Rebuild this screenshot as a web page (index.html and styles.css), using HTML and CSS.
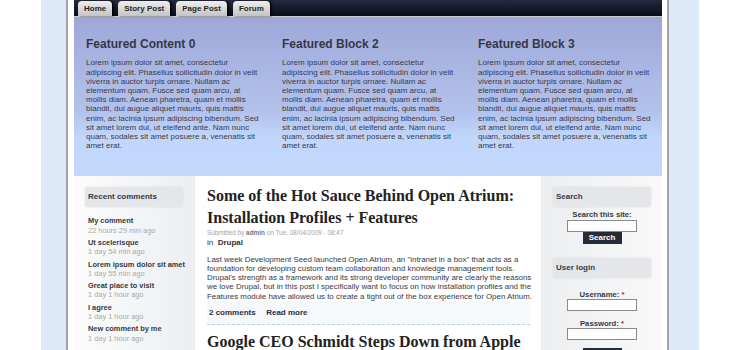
FILE: index.html
```html
<!DOCTYPE html>
<html>
<head>
  <link rel="stylesheet" href="styles.css">
</head>
<body>
  <div class="wrap">
    <div class="page">
      <div class="nav">
        <a class="tab">Home</a>
        <a class="tab">Story Post</a>
        <a class="tab">Page Post</a>
        <a class="tab">Forum</a>
      </div>

      <div class="featured">
        <div class="feat-col">
          <h2>Featured Content 0</h2>
          <p>Lorem ipsum dolor sit amet, consectetur adipiscing elit. Phasellus sollicitudin dolor in velit viverra in auctor turpis ornare. Nullam ac elementum quam. Fusce sed quam arcu, at mollis diam. Aenean pharetra, quam et mollis blandit, dui augue aliquet mauris, quis mattis enim, ac lacinia ipsum adipiscing bibendum. Sed sit amet lorem dui, ut eleifend ante. Nam nunc quam, sodales sit amet posuere a, venenatis sit amet erat.</p>
        </div>
        <div class="feat-col">
          <h2>Featured Block 2</h2>
          <p>Lorem ipsum dolor sit amet, consectetur adipiscing elit. Phasellus sollicitudin dolor in velit viverra in auctor turpis ornare. Nullam ac elementum quam. Fusce sed quam arcu, at mollis diam. Aenean pharetra, quam et mollis blandit, dui augue aliquet mauris, quis mattis enim, ac lacinia ipsum adipiscing bibendum. Sed sit amet lorem dui, ut eleifend ante. Nam nunc quam, sodales sit amet posuere a, venenatis sit amet erat.</p>
        </div>
        <div class="feat-col">
          <h2>Featured Block 3</h2>
          <p>Lorem ipsum dolor sit amet, consectetur adipiscing elit. Phasellus sollicitudin dolor in velit viverra in auctor turpis ornare. Nullam ac elementum quam. Fusce sed quam arcu, at mollis diam. Aenean pharetra, quam et mollis blandit, dui augue aliquet mauris, quis mattis enim, ac lacinia ipsum adipiscing bibendum. Sed sit amet lorem dui, ut eleifend ante. Nam nunc quam, sodales sit amet posuere a, venenatis sit amet erat.</p>
        </div>
      </div>

      <div class="main">
        <div class="sidebar sidebar-left">
          <div class="block">
            <h3 class="block-title">Recent comments</h3>
            <ul class="comments">
              <li><a>My comment</a><span>22 hours 29 min ago</span></li>
              <li><a>Ut scelerisque</a><span>1 day 54 min ago</span></li>
              <li><a>Lorem ipsum dolor sit amet</a><span>1 day 55 min ago</span></li>
              <li><a>Great place to visit</a><span>1 day 1 hour ago</span></li>
              <li><a>I agree</a><span>1 day 1 hour ago</span></li>
              <li><a>New comment by me</a><span>1 day 1 hour ago</span></li>
            </ul>
          </div>
        </div>

        <div class="content">
          <div class="node">
            <h1 class="node-title">Some of the Hot Sauce Behind Open Atrium: Installation Profiles + Features</h1>
            <div class="submitted">Submitted by <b>admin</b> on Tue, 08/04/2009 - 08:47</div>
            <div class="terms">in &nbsp;<a>Drupal</a></div>
            <p>Last week Development Seed launched Open Atrium, an "intranet in a box" that acts as a foundation for developing custom team collaboration and knowledge management tools. Drupal's strength as a framework and its strong developer community are clearly the reasons we love Drupal, but in this post I specifically want to focus on how installation profiles and the Features module have allowed us to create a tight out of the box experience for Open Atrium.</p>
            <div class="links"><a>2 comments</a><a>Read more</a></div>
          </div>
          <div class="node">
            <h1 class="node-title">Google CEO Schmidt Steps Down from Apple</h1>
          </div>
        </div>

        <div class="sidebar sidebar-right">
          <div class="block">
            <h3 class="block-title">Search</h3>
            <form class="form">
              <label>Search this site:</label>
              <input type="text" class="text">
              <button type="button" class="btn">Search</button>
            </form>
          </div>
          <div class="block">
            <h3 class="block-title">User login</h3>
            <form class="form login">
              <label>Username: <span class="req">*</span></label>
              <input type="text" class="text">
              <label class="pw">Password: <span class="req">*</span></label>
              <input type="password" class="text">
              <button type="button" class="btn">Log in</button>
            </form>
          </div>
        </div>
      </div>
    </div>
  </div>
</body>
</html>
```

FILE: styles.css
```css
body {
  margin: 0;
  background: #fff;
  font-family: "Liberation Sans", Arial, sans-serif;
  color: #333;
  overflow: hidden;
}

a {
  color: inherit;
  text-decoration: none;
  cursor: pointer;
}

.wrap {
  width: 658px;
  margin: 0 auto;
  background: #dde9f9;
  min-height: 350px;
}

.page {
  margin: 0 30px 0 25px;
  padding: 0 5px 0 6px;
  border-left: 2px solid #a4a4a4;
  border-right: 2px solid #a4a4a4;
  background: #fff;
  min-height: 350px;
}

/* top tabs */
.nav {
  display: flex;
  height: 16px;
  padding-left: 4px;
  background: linear-gradient(#252a40, #0a0b15);
  border-bottom: 1px solid #c9ccd6;
}

.tab {
  margin: 1px 6px 0 0;
  padding: 0 6px;
  height: 15px;
  line-height: 15px;
  font-size: 8px;
  font-weight: bold;
  color: #252525;
  background: linear-gradient(#eeeeee, #c4c4c4);
  border-radius: 4px 4px 0 0;
  box-shadow: 2px 0 2px rgba(0,0,0,0.8);
}

/* featured blocks */
.featured {
  display: flex;
  height: 159px;
  box-sizing: border-box;
  padding-top: 20px;
  background: linear-gradient(#9ea8d8, #b3c2ec 60%, #c1d6fa 76%, #c3d9fc);
}

.feat-col {
  width: 196px;
  box-sizing: border-box;
  padding-left: 12px;
}

.feat-col h2 {
  margin: 0;
  font-size: 12px;
  line-height: 14px;
  color: #353846;
}

.feat-col p {
  width: 174px;
  margin: 7.4px 0 0;
  font-size: 8px;
  line-height: 9.2px;
  color: #383b4a;
}

/* three columns */
.main {
  display: flex;
}

.sidebar {
  width: 121px;
  box-sizing: border-box;
  padding: 11px 12px 0 11px;
}

.sidebar-left {
  background: linear-gradient(to right, #fcfcfc, #eceef1);
}

.sidebar-right {
  padding: 11px 11px 0 12px;
  background: linear-gradient(to right, #eceef0, #f9f9f9);
}

.block-title {
  margin: 0;
  height: 20px;
  line-height: 20px;
  padding-left: 3px;
  font-size: 8px;
  color: #333a48;
  background: #e5e6ea;
  border-radius: 3px;
  box-shadow: 0 0 2px rgba(0,0,0,0.12);
}

.comments {
  list-style: none;
  margin: 9.4px 0 0;
  padding: 0 0 0 3px;
  font-size: 7.4px;
  line-height: 9.2px;
}

.comments li {
  margin-bottom: 3.2px;
}

.comments a {
  display: block;
  font-weight: bold;
  color: #343a48;
  white-space: nowrap;
}

.comments span {
  display: block;
  color: #a9a9a9;
}

.content {
  width: 346px;
  box-sizing: border-box;
  padding: 8.7px 11px 0 12px;
  background: #fff;
}

.node-title {
  margin: 0;
  font-family: "Liberation Serif", "Times New Roman", serif;
  font-size: 16px;
  line-height: 22px;
  color: #222;
}

.submitted {
  font-size: 6.4px;
  line-height: 7.6px;
  color: #a5a5a5;
}

.submitted b {
  color: #777;
}

.terms {
  margin-top: 2px;
  font-size: 8px;
  line-height: 9.2px;
  color: #333;
}

.terms a {
  font-weight: bold;
}

.node p {
  margin: 7.4px -8px 0 0;
  font-size: 7.9px;
  line-height: 9.2px;
  color: #333a48;
}

.links {
  display: flex;
  gap: 10.5px;
  padding: 7px 2px 6.5px;
  font-size: 8px;
  line-height: 9.2px;
  font-weight: bold;
  color: #2b2f3a;
  background: #f6f8fc;
  border-bottom: 1px dashed #b9cde6;
}

.node + .node {
  margin-top: 6px;
}

/* forms */
.form {
  display: flex;
  flex-direction: column;
  align-items: center;
  padding-top: 3.4px;
  margin-bottom: 14px;
}

.form label {
  font-size: 7.7px;
  line-height: 9.2px;
  font-weight: bold;
  color: #343a48;
}

.login {
  padding-top: 12px;
}

.login .pw {
  margin-top: 8px;
}

.req {
  color: #e0201a;
}

.text {
  display: block;
  width: 70px;
  height: 12px;
  box-sizing: border-box;
  margin: 0;
  padding: 0;
  border: 1px solid #8a8a8a;
  background: #fff;
}

.btn {
  display: block;
  width: 39px;
  height: 12px;
  margin: 0;
  padding: 0;
  border: 0;
  background: #262b3a;
  color: #fff;
  font-family: inherit;
  font-size: 8px;
  font-weight: bold;
}

.login .btn {
  margin-top: 8px;
}
```
